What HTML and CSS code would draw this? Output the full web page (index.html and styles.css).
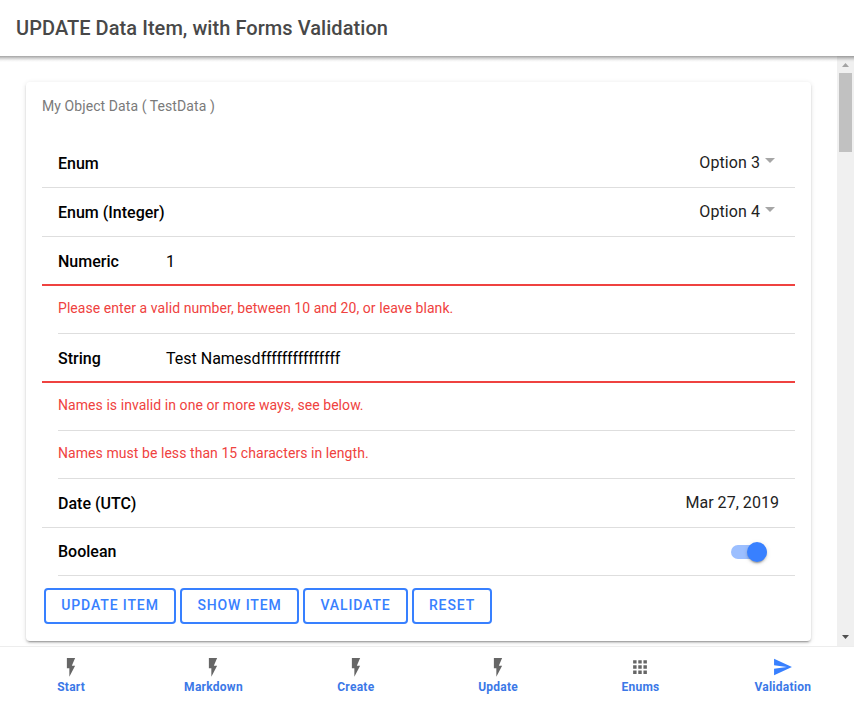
FILE: index.html
```html
<!DOCTYPE html>
<html lang="en">
<head>
<meta charset="utf-8">
<title>UPDATE Data Item, with Forms Validation</title>
<link rel="stylesheet" href="styles.css">
</head>
<body>
<header class="header"><h1>UPDATE Data Item, with Forms Validation</h1></header>
<div class="content">
  <main class="page">
    <section class="card">
      <div class="card-header"><span class="subtitle">My Object Data ( TestData )</span></div>
      <div class="list">
        <div class="item"><label>Enum</label><span class="value option">Option 3</span><i class="caret"></i></div>
        <div class="item"><label>Enum (Integer)</label><span class="value option">Option 4</span><i class="caret"></i></div>
        <div class="item invalid"><label>Numeric</label><span class="input">1</span></div>
        <div class="item error"><p>Please enter a valid number, between 10 and 20, or leave blank.</p></div>
        <div class="item invalid"><label>String</label><span class="input">Test Namesd<span class="tail">fffffffffffffff</span></span></div>
        <div class="item error"><p>Names is invalid in one or more ways, see below.</p></div>
        <div class="item error"><p>Names must be less than 15 characters in length.</p></div>
        <div class="item"><label>Date (UTC)</label><span class="value date">Mar 27, 2019</span></div>
        <div class="item inset"><label>Boolean</label><span class="toggle"><i class="knob"></i></span></div>
      </div>
      <div class="buttons">
        <button class="b-update">UPDATE ITEM</button>
        <button class="b-show">SHOW ITEM</button>
        <button class="b-validate">VALIDATE</button>
        <button class="b-reset">RESET</button>
      </div>
    </section>
  </main>
  <div class="scrollbar">
    <svg width="17" height="17" viewBox="0 0 17 17"><path d="M5 11h7L8.500 7z" fill="#a3a3a3"/></svg>
    <div class="thumb"></div>
    <svg class="down" width="17" height="17" viewBox="0 0 17 17"><path d="M5 6h7L8.500 10z" fill="#505050"/></svg>
  </div>
</div>
<nav class="tabs">
  <a><svg viewBox="0 0 512 512"><path d="M160 48v235.200h57.600V480L352 224h-76.800L352 48z"/></svg><span>Start</span></a>
  <a><svg viewBox="0 0 512 512"><path d="M160 48v235.200h57.600V480L352 224h-76.800L352 48z"/></svg><span>Markdown</span></a>
  <a><svg viewBox="0 0 512 512"><path d="M160 48v235.200h57.600V480L352 224h-76.800L352 48z"/></svg><span>Create</span></a>
  <a><svg viewBox="0 0 512 512"><path d="M160 48v235.200h57.600V480L352 224h-76.800L352 48z"/></svg><span>Update</span></a>
  <a><svg viewBox="0 0 512 512"><path d="M96 96h80v80H96zM216 96h80v80h-80zM336 96h80v80h-80zM96 216h80v80H96zM216 216h80v80h-80zM336 216h80v80h-80zM96 336h80v80H96zM216 336h80v80h-80zM336 336h80v80h-80z"/></svg><span>Enums</span></a>
  <a class="active"><svg viewBox="0 0 512 512"><path d="M48 448l416-192L48 64v149.300L346 256 48 298.700z"/></svg><span>Validation</span></a>
</nav>
</body>
</html>
```
FILE: styles.css
```css
* { box-sizing: border-box; }
body {
  margin: 0;
  width: 854px;
  height: 703px;
  overflow: hidden;
  display: flex;
  flex-direction: column;
  background: #fff;
  font-family: Roboto, sans-serif;
  font-size: 16px;
  color: #000;
}
.header {
  position: relative;
  z-index: 1;
  flex: none;
  height: 56px;
  padding: 0 16px;
  display: flex;
  align-items: center;
  background: #fff;
}
.header::after {
  content: "";
  position: absolute;
  left: 0;
  right: 0;
  top: 56px;
  height: 6px;
  background: linear-gradient(rgba(0,0,0,.36), rgba(0,0,0,.19) 35%, rgba(0,0,0,.05) 70%, transparent);
}
h1 { margin: 0; font-size: 20px; font-weight: 500; letter-spacing: .06px; color: #484848; }
.content { flex: none; height: 590px; display: flex; }
.page { flex: 1; padding: 26px 26px 5px; }
.card {
  height: 559px;
  padding: 16px;
  border-radius: 4px;
  background: #fff;
  box-shadow: 0 3px 1px -2px rgba(0,0,0,.2), 0 2px 2px 0 rgba(0,0,0,.14), 0 1px 5px 0 rgba(0,0,0,.12);
}
.card-header { height: 41px; font-size: 14px; line-height: 16px; letter-spacing: .08px; color: #7a7a7a; }
.item {
  height: 49px;
  padding: 0 16px;
  display: flex;
  align-items: center;
  border-bottom: 1px solid #dedede;
}
.item label { width: 108px; font-weight: 500; white-space: nowrap; }
.value { margin-left: auto; color: #222; padding-bottom: 2px; }
.option { letter-spacing: .08px; }
.date { letter-spacing: .04px; }
.tail { letter-spacing: -.27px; }
.caret {
  margin: 0 4px 6px 5px;
  border: 5px solid transparent;
  border-top-color: #a6a6a6;
  border-bottom: 0;
}
.invalid { padding-top: 2px; border-bottom: 2px solid #ef4240; }
.error, .inset { height: 48px; margin-left: 16px; padding-left: 0; }
.error p { margin: 0 0 4px; font-size: 14px; letter-spacing: .063px; color: #ef4240; }
.toggle {
  position: relative;
  width: 36px;
  height: 14px;
  margin: 0 12px 0 auto;
  border-radius: 7px;
  background: #9cbfff;
}
.knob {
  position: absolute;
  top: -3px;
  right: 0;
  width: 20px;
  height: 20px;
  border-radius: 50%;
  background: #3880ff;
  box-shadow: 0 3px 1px -2px rgba(0,0,0,.2), 0 2px 2px 0 rgba(0,0,0,.14), 0 1px 5px 0 rgba(0,0,0,.12);
}
.buttons { display: flex; gap: 4px; padding: 12px 2px 0; }
button {
  height: 36px;
  padding: 0 0 2px;
  border: 2px solid #3880ff;
  border-radius: 4px;
  background: transparent;
  color: #3880ff;
  font: 500 14px Roboto, sans-serif;
  letter-spacing: .88px;
  white-space: nowrap;
}
.b-update { width: 132px; }
.b-show { width: 119px; }
.b-validate { width: 105px; }
.b-reset { width: 80px; }
.scrollbar { width: 17px; background: #f0f0f0; display: flex; flex-direction: column; }
.scrollbar svg { display: block; }
.thumb { width: 13px; height: 79px; margin-left: 2px; background: #c1c1c1; }
.down { margin-top: auto; }
.tabs {
  flex: none;
  height: 57px;
  display: grid;
  grid-template-columns: repeat(6, 1fr);
  border-top: 1px solid #ededed;
}
.tabs a {
  display: flex;
  flex-direction: column;
  align-items: center;
  padding-top: 9px;
  font-size: 12px;
  font-weight: 700;
  line-height: 14px;
  letter-spacing: .26px;
  color: #3b78e7;
}
.tabs svg { width: 22px; height: 22px; margin-bottom: 2px; fill: #666; }
.tabs .active svg { fill: #3880ff; }
```
